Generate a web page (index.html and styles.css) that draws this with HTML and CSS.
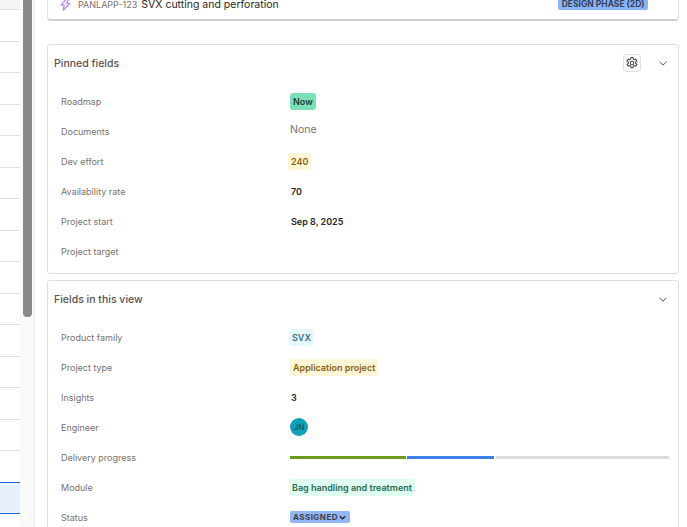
FILE: index.html
```html
<!DOCTYPE html>
<html lang="en">
<head>
<meta charset="utf-8">
<title>Project details</title>
<link rel="stylesheet" href="styles.css">
</head>
<body>
<div class="app">
  <aside class="list">
    <div class="list-head"></div>
    <div class="list-row"></div><div class="list-row"></div><div class="list-row"></div><div class="list-row"></div>
    <div class="list-row"></div><div class="list-row"></div><div class="list-row"></div><div class="list-row"></div>
    <div class="list-row"></div><div class="list-row"></div><div class="list-row"></div><div class="list-row"></div>
    <div class="list-row"></div><div class="list-row"></div><div class="list-row"></div>
    <div class="list-row list-row-selected"></div>
  </aside>
  <div class="track"><div class="thumb"></div></div>
  <div class="divider"></div>
  <main class="content">
    <section class="linked">
      <svg class="bolt" viewBox="0 0 11 13" width="11" height="13"><path d="M6.5 .8 1.2 7.2h3L3.2 12.2 9.8 5.4H6.7L8.6 .8z" fill="none" stroke="#c084fc" stroke-width="1.3" stroke-linejoin="round"/></svg>
      <span class="issue-key">PANLAPP-123</span>
      <span class="issue-title">SVX cutting and perforation</span>
      <span class="phase">DESIGN PHASE (2D)</span>
    </section>

    <section class="panel panel-pinned">
      <header class="panel-head">
        <h2>Pinned fields</h2>
        <button class="gear" type="button" aria-label="Settings">
          <svg viewBox="0 0 24 24" width="14" height="14" fill="none" stroke="#44403c" stroke-width="1.8" stroke-linejoin="round"><path d="M10.3 2.5h3.4l.5 2.8 1.9 1.1 2.7-1 1.7 3-2.2 1.8v2.2l2.2 1.8-1.7 3-2.7-1-1.9 1.1-.5 2.8h-3.4l-.5-2.8-1.9-1.1-2.7 1-1.7-3 2.2-1.8v-2.2L3.4 8.4l1.7-3 2.7 1 1.9-1.1z"/><circle cx="12" cy="12" r="3"/></svg>
        </button>
        <svg class="chev" viewBox="0 0 8 5" width="8" height="5"><path d="M.5 .7 4 4.2 7.5 .7" fill="none" stroke="#57534e" stroke-width="1"/></svg>
      </header>
      <dl class="fields">
        <div class="field"><dt>Roadmap</dt><dd><span class="tag tag-now">Now</span></dd></div>
        <div class="field"><dt>Documents</dt><dd><span class="none">None</span></dd></div>
        <div class="field"><dt>Dev effort</dt><dd><span class="tag tag-yellow tag-tight">240</span></dd></div>
        <div class="field"><dt>Availability rate</dt><dd><span class="plain">70</span></dd></div>
        <div class="field"><dt>Project start</dt><dd><span class="plain">Sep 8, 2025</span></dd></div>
        <div class="field"><dt>Project target</dt><dd></dd></div>
      </dl>
    </section>

    <section class="panel panel-view">
      <header class="panel-head">
        <h2>Fields in this view</h2>
        <svg class="chev" viewBox="0 0 8 5" width="8" height="5"><path d="M.5 .7 4 4.2 7.5 .7" fill="none" stroke="#57534e" stroke-width="1"/></svg>
      </header>
      <dl class="fields">
        <div class="field"><dt>Product family</dt><dd><span class="tag tag-cyan">SVX</span></dd></div>
        <div class="field"><dt>Project type</dt><dd><span class="tag tag-yellow">Application project</span></dd></div>
        <div class="field"><dt>Insights</dt><dd><span class="plain">3</span></dd></div>
        <div class="field"><dt>Engineer</dt><dd><span class="avatar">JN</span></dd></div>
        <div class="field"><dt>Delivery progress</dt><dd>
          <div class="progress"><span class="seg seg-green"></span><span class="seg seg-blue"></span><span class="seg seg-gray"></span></div>
        </dd></div>
        <div class="field"><dt>Module</dt><dd><span class="tag tag-mint">Bag handling and treatment</span></dd></div>
        <div class="field"><dt>Status</dt><dd><span class="status">ASSIGNED<svg viewBox="0 0 8 5" width="7" height="5"><path d="M1 1l3 3 3-3" fill="none" stroke="#292524" stroke-width="1.5"/></svg></span></dd></div>
      </dl>
    </section>
  </main>
</div>
</body>
</html>
```

FILE: styles.css
```css
* { box-sizing: border-box; }
html, body { margin: 0; height: 100%; }
body {
  width: 687px;
  height: 527px;
  overflow: hidden;
  background: #fff;
  font-family: Inter, "Liberation Sans", sans-serif;
}
.app { display: flex; height: 527px; overflow: hidden; }

.list { width: 20px; flex: none; }
.list-head { height: 10px; background: #f5f5f4; border-bottom: 1px solid #e0e0e0; }
.list-row { height: 31.5px; border-bottom: 1px solid #e0e0e0; }
.list-row-selected { background: #e8f0fe; border-bottom: 1px solid #1a66d6; box-shadow: 0 -1px 0 #1a66d6; }

.track { width: 13px; flex: none; padding-left: 3px; background: #fafafa; }
.thumb { width: 9px; height: 317px; background: #8a8a8a; border-radius: 0 0 4px 4px; }
.divider { width: 2px; flex: none; background: #f0f0f0; }

.content { flex: 1; min-width: 0; padding: 0 8px 0 12px; }

.linked {
  height: 21px;
  display: flex;
  align-items: center;
  padding: 0 30px 11px 12px;
  background: #fff;
  border: 1px solid #e0e0e0;
  border-top: 0;
  border-bottom: 2px solid #cfcfcf;
  border-radius: 0 0 4px 4px;
}
.bolt { flex: none; margin-right: 7px; }
.issue-key { font-size: 9px; color: #78716c; margin-right: 4px; white-space: nowrap; }
.issue-title { font-size: 10.5px; color: #292524; white-space: nowrap; flex: 1; }
.phase {
  font-size: 8.5px;
  font-weight: 700;
  color: #334155;
  background: #8ab4f8;
  padding: 0 3.5px;
  height: 11px;
  line-height: 11px;
  border-radius: 2px;
  white-space: nowrap;
}

.panel {
  background: #fff;
  border: 1px solid #dedede;
  border-radius: 3px;
}
.panel-pinned { margin-top: 23px; height: 230px; }
.panel-view { margin-top: 6px; height: 300px; }
.panel-head {
  display: flex;
  align-items: center;
  height: 36px;
  padding: 0 11px 0 6px;
}
.panel-head h2 {
  flex: 1;
  margin: 0;
  font-size: 10.5px;
  font-weight: 500;
  color: #57534e;
}
.gear {
  display: flex;
  align-items: center;
  justify-content: center;
  width: 18px;
  height: 18px;
  padding: 0;
  margin-right: 18px;
  background: #fff;
  border: 1px solid #e0e0e0;
  border-radius: 3px;
}
.chev { flex: none; }

.fields { margin: 0; padding: 5px 0 0; }
.field { display: flex; align-items: center; height: 30px; }
.field dt {
  width: 242px;
  flex: none;
  padding-left: 13px;
  font-size: 9px;
  color: #78716c;
}
.field dd { flex: 1; margin: 0; padding-right: 9px; display: flex; align-items: center; }

.tag {
  display: inline-block;
  font-size: 9px;
  font-weight: 600;
  height: 17px;
  line-height: 17px;
  padding: 0 3px;
  border-radius: 3px;
  white-space: nowrap;
}
.tag-now { background: #7ae0b6; color: #1c3d30; }
.tag-yellow { background: #fef6d6; color: #8a5f0c; }
.tag-tight { margin-left: -2px; }
.tag-cyan { background: #e3f9fd; color: #3f6f7d; margin-left: -1px; }
.tag-mint { background: #e0fbef; color: #256b52; margin-left: -1px; }
.none { font-size: 10.5px; color: #78716c; margin-bottom: 4px; }
.plain { font-size: 9px; font-weight: 600; color: #292524; margin-left: 1px; }

.avatar {
  width: 18px;
  height: 18px;
  border-radius: 50%;
  background: #0e9fbb;
  color: #164e63;
  font-size: 8px;
  font-weight: 500;
  display: flex;
  align-items: center;
  justify-content: center;
}
.progress { flex: 1; display: flex; height: 3px; }
.seg { display: block; height: 3px; }
.seg-green { width: 116px; background: #6b9a1f; margin-right: 1px; }
.seg-blue { width: 87px; background: #3b82e6; margin-right: 2px; }
.seg-gray { flex: 1; background: #dcdcdc; }

.status {
  display: inline-flex;
  align-items: center;
  gap: 1px;
  height: 12px;
  padding: 0 4px 0 3px;
  font-size: 8px;
  font-weight: 700;
  letter-spacing: .45px;
  color: #3f3f46;
  background: #93b7f6;
  border-radius: 2px;
}
```
